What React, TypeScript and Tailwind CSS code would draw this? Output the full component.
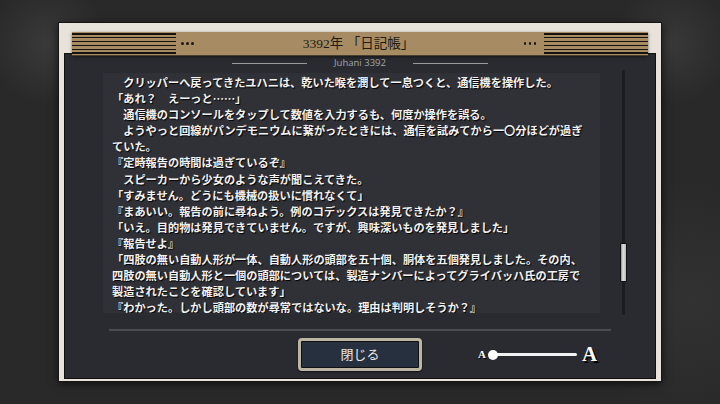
import React from "react";

const lines = [
  "　クリッパーへ戻ってきたユハニは、乾いた喉を潤して一息つくと、通信機を操作した。",
  "「あれ？　えーっと……」",
  "　通信機のコンソールをタップして数値を入力するも、何度か操作を誤る。",
  "　ようやっと回線がパンデモニウムに繋がったときには、通信を試みてから一〇分ほどが過ぎ",
  "ていた。",
  "『定時報告の時間は過ぎているぞ』",
  "　スピーカーから少女のような声が聞こえてきた。",
  "「すみません。どうにも機械の扱いに慣れなくて」",
  "『まあいい。報告の前に尋ねよう。例のコデックスは発見できたか？』",
  "「いえ。目的物は発見できていません。ですが、興味深いものを発見しました」",
  "『報告せよ』",
  "「四肢の無い自動人形が一体、自動人形の頭部を五十個、胴体を五個発見しました。その内、",
  "四肢の無い自動人形と一個の頭部については、製造ナンバーによってグライバッハ氏の工房で",
  "製造されたことを確認しています」",
  "『わかった。しかし頭部の数が尋常ではないな。理由は判明しそうか？』",
];

function Stripes() {
  return (
    <div className="flex h-full w-[104px] flex-col justify-between py-[1px]">
      {[0, 1, 2, 3, 4, 5].map((i) => (
        <div key={i} className="h-[1.5px] bg-[#16120d]" />
      ))}
    </div>
  );
}

function Dots() {
  return (
    <div className="flex items-center gap-[2.5px]">
      <span className="h-[2.5px] w-[2.5px] rounded-full bg-[#1c1711]" />
      <span className="h-[2.5px] w-[2.5px] rounded-full bg-[#1c1711]" />
      <span className="h-[2.5px] w-[2.5px] rounded-full bg-[#1c1711]" />
    </div>
  );
}

export default function App() {
  return (
    <div className="h-[404px] w-[720px] overflow-hidden bg-[#29292a] bg-[radial-gradient(circle_at_48px_44px,#3a3a3a_0,transparent_60px),radial-gradient(circle_at_672px_44px,#383838_0,transparent_60px),radial-gradient(circle_at_690px_300px,#323232_0,transparent_120px)] pl-[58px] pt-[22px]">
      {/* 外枠 */}
      <div className="flex h-[360px] w-[604px] flex-col border border-[#151515] bg-[#e8e3da] px-[5px] pb-[2px] pt-[9px] shadow-[0_2px_8px_rgba(0,0,0,0.6)]">
        {/* タイトルバー */}
        <div className="relative z-10 mx-[8px] flex h-[24px] items-center border-b border-[#4a3f2d] bg-[#a68b63] shadow-[0_1px_3px_rgba(0,0,0,0.5)]">
          <Stripes />
          <div className="ml-[5px]">
            <Dots />
          </div>
          <div className="flex-1 text-center font-['Liberation_Serif','Noto_Sans_CJK_JP',serif] text-[13.5px] leading-none text-[#221b12]">
            3392年 「日記帳」
          </div>
          <div className="mr-[8px]">
            <Dots />
          </div>
          <Stripes />
        </div>

        {/* 本体 */}
        <div className="-mt-[3px] flex h-[326px] flex-col border border-[#111] bg-[#2a2b30]">
          <div className="mt-[3px] flex h-[12px] items-center justify-center gap-[27px]">
            <div className="h-px w-[75px] bg-[#9a9a9a]" />
            <div className="font-['Open_Sans',sans-serif] text-[9.5px] leading-none text-[#a5a5a5]">
              Juhani 3392
            </div>
            <div className="h-px w-[75px] bg-[#9a9a9a]" />
          </div>

          <div className="mt-[4px] flex h-[240px]">
            <div className="ml-[38px] h-[240px] w-[497px] overflow-hidden bg-[#303137] pl-[9px] pt-[1px] font-['Noto_Sans_CJK_JP',sans-serif] text-[11.2px] font-bold leading-[16.1px] text-[#f2f2f2] [text-shadow:1px_1px_1px_#000]">
              {lines.map((l, i) => (
                <div key={i} className="whitespace-nowrap">
                  {l}
                </div>
              ))}
            </div>
            <div className="-mt-[3px] ml-[20px] flex h-[245px] w-[7px] flex-col items-center">
              <div className="flex h-full w-[3px] flex-col items-center rounded-full bg-[#1b1c20]">
                <div className="mt-[173px] h-[39px] w-[7px] shrink-0 rounded-[1px] border border-[#111] bg-[linear-gradient(to_right,#8e8e8e,#e0e0e0_40%,#b8b8b8)]" />
              </div>
            </div>
          </div>

          <div className="ml-[44px] mt-[16px] h-[2px] w-[502px] bg-[#4a4e54]" />

          <div className="mt-[7px] grid h-[33px] grid-cols-[1fr_124px_1fr]">
            <div />
            <button className="flex items-center justify-center rounded-[4px] border-[3px] border-[#bdb5a4] bg-[#26303f] font-['Liberation_Serif','Noto_Sans_CJK_JP',serif] text-[13px] text-[#e8e8e8] shadow-[inset_0_0_0_1px_#111,0_1px_2px_rgba(0,0,0,0.6)]">
              閉じる
            </button>
            <div className="flex items-center pl-[56px] font-['Liberation_Serif',serif] font-bold text-white [text-shadow:1px_1px_0_#000]">
              <span className="text-[11px] leading-none">A</span>
              <div className="relative ml-[2px] h-[10px] w-[89px]">
                <div className="absolute left-[5px] right-0 top-[3.5px] h-[3px] rounded-full bg-[#f2f2f2]" />
                <div className="absolute left-0 top-0 h-[10px] w-[10px] rounded-full bg-white" />
              </div>
              <span className="ml-[5px] text-[21px] leading-none [text-shadow:2px_2px_0_#000]">
                A
              </span>
            </div>
          </div>
        </div>
      </div>
    </div>
  );
}
